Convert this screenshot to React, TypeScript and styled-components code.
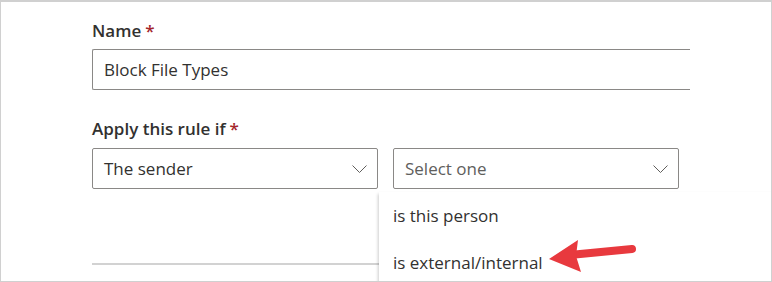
import React from "react";
import styled, { createGlobalStyle } from "styled-components";

const Global = createGlobalStyle`
  html, body { margin: 0; padding: 0; background: #ffffff; }
  body { font-family: "Open Sans", "Noto Sans", "Liberation Sans", sans-serif; }
`;

const Frame = styled.div`
  position: relative;
  box-sizing: border-box;
  width: 772px;
  height: 282px;
  border: 1px solid #d0d0d0;
  border-top-width: 2px;
  overflow: hidden;
  background: #ffffff;
`;

const Form = styled.div`
  display: flex;
  flex-direction: column;
  padding: 18px 0 0 91px;
`;

const Label = styled.div<{ $top?: number }>`
  margin-top: ${(p) => p.$top ?? 0}px;
  font-size: 17px;
  line-height: 22px;
  font-weight: 600;
  color: #323130;
`;

const Required = styled.span`
  color: #a4262c;
  margin-left: 4px;
`;

const NameInput = styled.div`
  box-sizing: border-box;
  margin-top: 7px;
  width: 598px;
  height: 41px;
  display: flex;
  align-items: center;
  padding-left: 11px;
  border: 1px solid #8a8886;
  border-right: none;
  border-radius: 2px 0 0 2px;
  font-size: 17px;
  color: #323130;
`;

const SelectRow = styled.div`
  display: flex;
  gap: 15px;
  margin-top: 8px;
`;

const Select = styled.div<{ $placeholder?: boolean }>`
  box-sizing: border-box;
  width: 286px;
  height: 41px;
  display: flex;
  align-items: center;
  justify-content: space-between;
  padding: 0 10px 0 11px;
  border: 1px solid #8a8886;
  border-radius: 2px;
  font-size: 17px;
  color: ${(p) => (p.$placeholder ? "#605e5c" : "#323130")};
`;

const Divider = styled.div`
  margin-top: 74px;
  width: 588px;
  height: 2px;
  background: #d2d2d2;
`;

const Menu = styled.div`
  position: absolute;
  left: 378px;
  top: 190px;
  width: 420px;
  height: 120px;
  background: #ffffff;
  box-shadow: -3px 0 3px -2px rgba(0, 0, 0, 0.2);
  display: flex;
  flex-direction: column;
`;

const MenuItem = styled.div`
  height: 47px;
  display: flex;
  align-items: center;
  padding-left: 14px;
  font-size: 17px;
  color: #323130;
`;

const Arrow = styled.svg`
  position: absolute;
  left: 0;
  top: 0;
  pointer-events: none;
`;

const Chevron = () => (
  <svg width="15" height="8" viewBox="0 0 15 8">
    <polyline points="0.5,0.5 7.5,7.5 14.5,0.5" fill="none" stroke="#605e5c" strokeWidth="1" />
  </svg>
);

export default function App() {
  return (
    <>
      <Global />
      <Frame>
        <Form>
          <Label>
            Name<Required>*</Required>
          </Label>
          <NameInput>Block File Types</NameInput>
          <Label $top={28}>
            Apply this rule if<Required>*</Required>
          </Label>
          <SelectRow>
            <Select>
              <span>The sender</span>
              <Chevron />
            </Select>
            <Select $placeholder>
              <span>Select one</span>
              <Chevron />
            </Select>
          </SelectRow>
          <Divider />
        </Form>
        <Menu>
          <MenuItem>is this person</MenuItem>
          <MenuItem>is external/internal</MenuItem>
        </Menu>
        <Arrow width="772" height="282" viewBox="0 0 772 282">
          <line x1="574" y1="252.5" x2="631" y2="247" stroke="#e8393e" strokeWidth="8" strokeLinecap="round" />
          <polygon points="548,257 577,238 575,254 580,270" fill="#e8393e" />
        </Arrow>
      </Frame>
    </>
  );
}
